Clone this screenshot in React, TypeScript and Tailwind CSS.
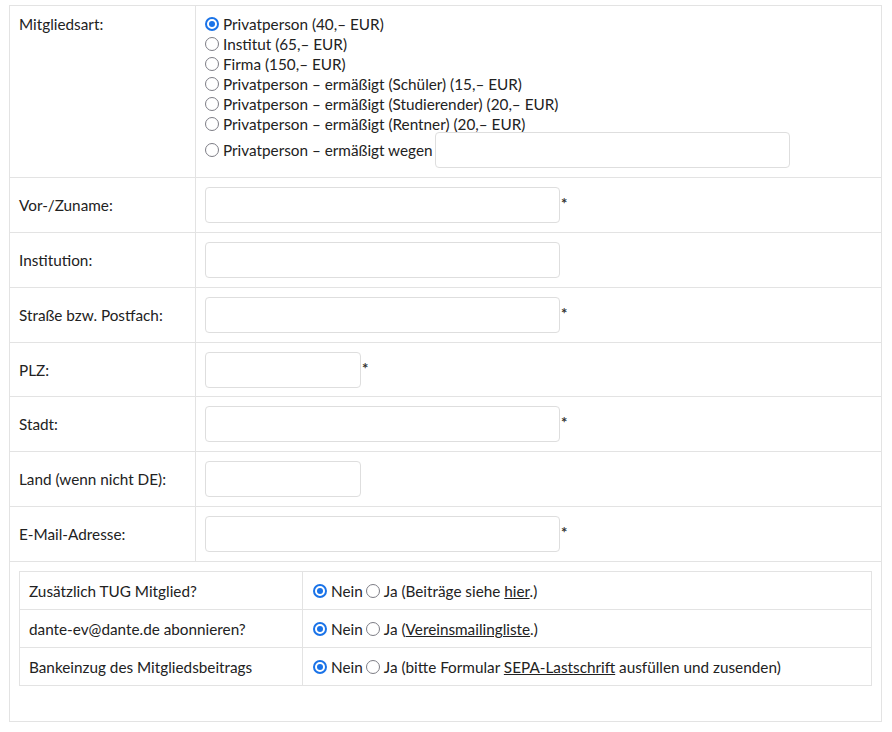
import React from "react";

const options = [
  "Privatperson (40,– EUR)",
  "Institut (65,– EUR)",
  "Firma (150,– EUR)",
  "Privatperson – ermäßigt (Schüler) (15,– EUR)",
  "Privatperson – ermäßigt (Studierender) (20,– EUR)",
  "Privatperson – ermäßigt (Rentner) (20,– EUR)",
];

const fields = [
  { label: "Vor-/Zuname:", small: false, req: true },
  { label: "Institution:", small: false, req: false },
  { label: "Straße bzw. Postfach:", small: false, req: true },
  { label: "PLZ:", small: true, req: true },
  { label: "Stadt:", small: false, req: true },
  { label: "Land (wenn nicht DE):", small: true, req: false },
  { label: "E-Mail-Adresse:", small: false, req: true },
];

// drawn radio, native one renders too thin
const Radio = ({ checked }: { checked?: boolean }) =>
  checked ? (
    <span className="mr-[4px] flex h-[14px] w-[14px] shrink-0 items-center justify-center rounded-full border-[2px] border-[#1a73e8] bg-white">
      <span className="h-[6px] w-[6px] rounded-full bg-[#1a73e8]" />
    </span>
  ) : (
    <span className="mr-[4px] h-[14px] w-[14px] shrink-0 rounded-full border-[1.5px] border-[#7d7d85] bg-white" />
  );

const TextInput = ({ w }: { w: string }) => (
  <input
    type="text"
    className={`${w} h-[36px] rounded-[4px] border border-[#dedede] bg-white outline-none`}
  />
);

const Req = () => (
  <span className="ml-[1px] -mt-[3px] text-[15px] font-bold leading-none text-[#333]">*</span>
);

const border = "border-[#e3e3e3]";

export default function App() {
  return (
    <div
      className="bg-white text-[15.3px] leading-[20px] text-[#222]"
      style={{ fontFamily: "Lato, 'Noto Sans', sans-serif" }}
    >
      <div className={`ml-[9px] mt-[5px] w-[873px] border ${border}`}>
        {/* Mitgliedsart */}
        <div className={`flex border-b ${border}`}>
          <div className={`w-[186px] shrink-0 border-r ${border} px-[9px] pt-[8px]`}>
            Mitgliedsart:
          </div>
          <div className="px-[9px] pt-[8px] pb-[9px]">
            {options.map((o, i) => (
              <div key={o} className="flex items-center">
                <Radio checked={i === 0} />
                {o}
              </div>
            ))}
            <div className="-mt-[2px] flex items-center">
              <Radio />
              <span className="mr-[2px]">Privatperson – ermäßigt wegen</span>
              <TextInput w="w-[355px]" />
            </div>
          </div>
        </div>

        {fields.map((f, i) => (
          <div key={f.label} className={`flex border-b ${border}`}>
            <div className={`flex w-[186px] shrink-0 items-center border-r ${border} px-[9px]`}>
              {f.label}
            </div>
            <div className={`flex items-center px-[9px] ${i === 3 ? "py-[8.5px]" : "py-[9px]"}`}>
              <TextInput w={f.small ? "w-[156px]" : "w-[355px]"} />
              {f.req && <Req />}
            </div>
          </div>
        ))}

        {/* Zusatz */}
        <div className="px-[9px] pt-[9px] pb-[35px]">
          <div className={`border ${border}`}>
            <div className={`flex border-b ${border}`}>
              <div className={`w-[283px] shrink-0 border-r ${border} px-[9px] pt-[9px] pb-[8px]`}>
                Zusätzlich TUG Mitglied?
              </div>
              <div className="flex items-center px-[10px] pt-[9px] pb-[8px]">
                <Radio checked />
                <span className="mr-[3px]">Nein</span>
                <Radio />
                <span>
                  Ja (Beiträge siehe <a className="underline">hier</a>.)
                </span>
              </div>
            </div>
            <div className={`flex border-b ${border}`}>
              <div className={`w-[283px] shrink-0 border-r ${border} px-[9px] pt-[9px] pb-[8px]`}>
                dante-ev@dante.de abonnieren?
              </div>
              <div className="flex items-center px-[10px] pt-[9px] pb-[8px]">
                <Radio checked />
                <span className="mr-[3px]">Nein</span>
                <Radio />
                <span>
                  Ja (<a className="underline">Vereinsmailingliste</a>.)
                </span>
              </div>
            </div>
            <div className="flex">
              <div className={`w-[283px] shrink-0 border-r ${border} px-[9px] pt-[9px] pb-[8px]`}>
                Bankeinzug des Mitgliedsbeitrags
              </div>
              <div className="flex items-center px-[10px] pt-[9px] pb-[8px]">
                <Radio checked />
                <span className="mr-[3px]">Nein</span>
                <Radio />
                <span>
                  Ja (bitte Formular <a className="underline">SEPA-Lastschrift</a> ausfüllen und zusenden)
                </span>
              </div>
            </div>
          </div>
        </div>
      </div>
    </div>
  );
}
